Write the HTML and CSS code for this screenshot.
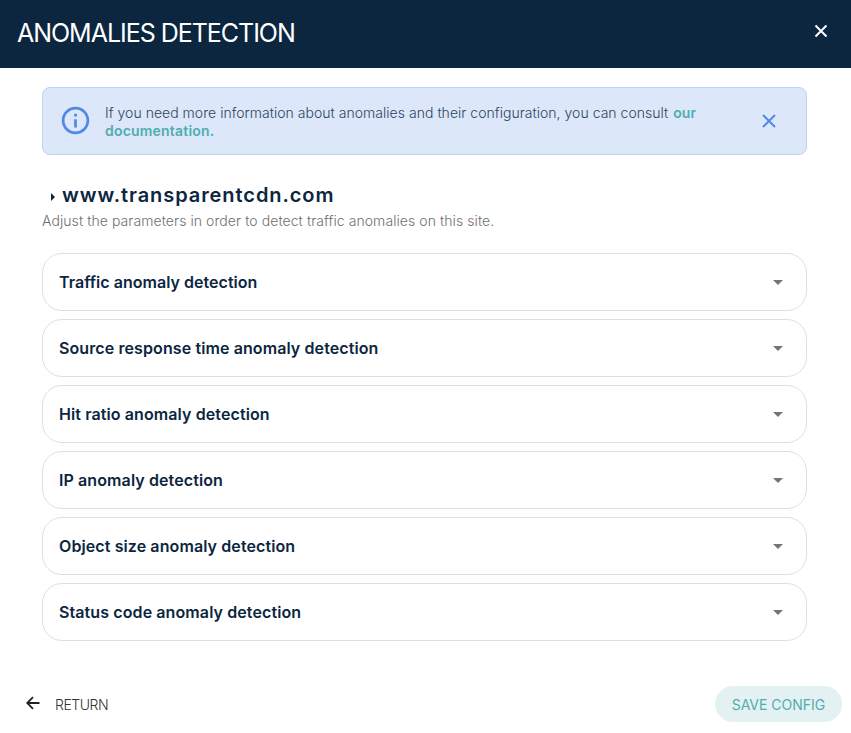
FILE: index.html
```html
<!DOCTYPE html>
<html lang="en">
<head>
<meta charset="utf-8">
<title>Anomalies detection</title>
<link rel="stylesheet" href="styles.css">
</head>
<body>
<div class="dialog">
  <header class="header">
    <h1 class="title"><span>ANOMALIES DETECTION</span></h1>
    <svg class="close" viewBox="0 0 14 14"><path d="M1.5 1.5l11 11M12.5 1.5l-11 11"/></svg>
  </header>
  <main class="content">
    <div class="alert">
      <svg class="info" viewBox="0 0 24 24"><path d="M11 7h2v2h-2zm0 4h2v6h-2zm1-9C6.48 2 2 6.48 2 12s4.48 10 10 10 10-4.48 10-10S17.52 2 12 2zm0 18c-4.41 0-8-3.59-8-8s3.590-8 8-8 8 3.590 8 8-3.590 8-8 8z"/></svg>
      <p class="alert-text"><span class="copy">If you need more information about anomalies and their configuration, you can consult</span> <a class="link our">our</a><br><a class="link">documentation.</a></p>
      <svg class="close alert-close" viewBox="0 0 14 14"><path d="M1 1l12 12M13 1l-12 12"/></svg>
    </div>
    <h2 class="site"><svg class="marker" viewBox="0 0 4 8"><path d="M0 0l4 4-4 4z"/></svg><span>www.transparentcdn.com</span></h2>
    <p class="hint"><span>Adjust the parameters in order to detect traffic anomalies on this site.</span></p>
    <div class="list">
      <div class="row"><span class="r1">Traffic anomaly detection</span><svg class="caret" viewBox="0 0 10 5"><path d="M0 0h10L5 5z"/></svg></div>
      <div class="row"><span class="r2">Source response time anomaly detection</span><svg class="caret" viewBox="0 0 10 5"><path d="M0 0h10L5 5z"/></svg></div>
      <div class="row"><span class="r3">Hit ratio anomaly detection</span><svg class="caret" viewBox="0 0 10 5"><path d="M0 0h10L5 5z"/></svg></div>
      <div class="row"><span class="r4">IP anomaly detection</span><svg class="caret" viewBox="0 0 10 5"><path d="M0 0h10L5 5z"/></svg></div>
      <div class="row"><span class="r5">Object size anomaly detection</span><svg class="caret" viewBox="0 0 10 5"><path d="M0 0h10L5 5z"/></svg></div>
      <div class="row"><span class="r6">Status code anomaly detection</span><svg class="caret" viewBox="0 0 10 5"><path d="M0 0h10L5 5z"/></svg></div>
    </div>
  </main>
  <footer class="footer">
    <div class="return"><svg class="arrow" viewBox="0 0 14 14"><path d="M13.500 7H1.500M7 1.200L1.200 7 7 12.800"/></svg><span>RETURN</span></div>
    <div class="save"><span>SAVE CONFIG</span></div>
  </footer>
</div>
</body>
</html>
```
FILE: styles.css
```css
* { box-sizing: border-box; margin: 0; padding: 0; }
body { background: #fff; color: #0c2640; font-family: Inter, "Liberation Sans", sans-serif; white-space: nowrap; }
svg { display: block; flex: none; }
.dialog { width: 851px; height: 733px; display: flex; flex-direction: column; overflow: hidden; }
.header { height: 68px; background: #0c2640; color: #fff; display: flex; align-items: center; justify-content: space-between; padding: 0 23px 2px 17px; }
.title { font-size: 25px; font-weight: 400; line-height: 32px; letter-spacing: -1.03px; }
.close { width: 14px; height: 14px; fill: none; stroke: #fff; stroke-width: 2; margin-top: -4px; }
.content { padding: 19px 44px 0 42px; flex: 1; }
.alert { height: 68px; border: 1px solid #bcd3f5; border-radius: 8px; background: #dce7f9; display: flex; align-items: center; padding: 0 30px 0 16px; }
.info { width: 33px; height: 33px; fill: #5289e6; margin-top: -1px; }
.alert-text { font-size: 14px; line-height: 18px; font-weight: 300; margin-left: 13px; flex: 1; padding-top: 2px; }
.copy { letter-spacing: 0.03px; color: #2c4560; }
.link { font-weight: 600; color: #50adb0; letter-spacing: 0.2px; }
.our { margin-left: 1px; letter-spacing: 0; }
.alert-close { stroke: #5289e6; margin-top: 0; }
.site { display: flex; align-items: center; font-size: 20px; line-height: 26px; font-weight: 600; margin: 27px 0 0 8px; letter-spacing: 0.93px; }
.marker { width: 4px; height: 8px; fill: #0c2640; margin: 4px 7px 0 1px; }
.hint { font-size: 14px; line-height: 18px; font-weight: 300; color: #6f6f6f; margin-top: 4px; letter-spacing: 0.075px; }
.list { display: flex; flex-direction: column; gap: 8px; margin-top: 23px; }
.row { height: 58px; border: 1px solid #e0e0e0; border-radius: 20px; display: flex; align-items: center; justify-content: space-between; padding: 0 23px 0 16px; font-size: 16px; font-weight: 600; letter-spacing: 0.1px; }
.r1 { letter-spacing: 0.03px; }
.caret { width: 10px; height: 5px; fill: #757575; }
.footer { height: 48px; display: flex; align-items: flex-start; justify-content: space-between; padding: 1px 9px 0 26px; font-size: 14px; font-weight: 300; }
.return { display: flex; align-items: center; height: 36px; color: #333; letter-spacing: -0.45px; }
.arrow { width: 14px; height: 14px; fill: none; stroke: #222; stroke-width: 1.800; margin-right: 15px; margin-top: -2px; }
.save { width: 127px; height: 36px; border-radius: 18px; background: #e3f1f2; color: #50adb0; font-weight: 400; display: flex; align-items: center; justify-content: center; }
```
